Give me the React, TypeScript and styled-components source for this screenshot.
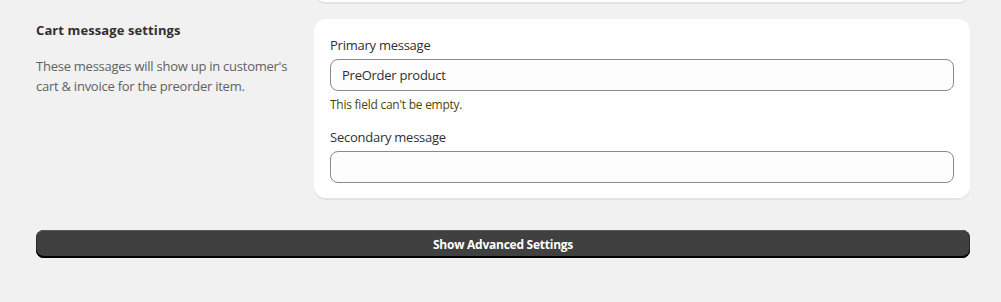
import React from 'react'
import styled, { createGlobalStyle } from 'styled-components'

const GlobalStyle = createGlobalStyle`
  html, body {
    margin: 0;
    padding: 0;
    background: #f1f1f1;
    font-family: "Open Sans", "Noto Sans", sans-serif;
    letter-spacing: -0.25px;
    color: #303030;
  }
  * { box-sizing: border-box; }
`

const Page = styled.div`
  padding: 0 31px 0 36px;
  display: flex;
  flex-direction: column;
`

const Section = styled.div`
  display: grid;
  grid-template-columns: 258px 1fr;
  column-gap: 20px;
  margin-top: 16px;
`

const Annotation = styled.div`
  display: flex;
  flex-direction: column;
  gap: 16px;
  padding-top: 1px;
`

const Heading = styled.h2`
  margin: 0;
  font-size: 13px;
  font-weight: 700;
  line-height: 20px;
  letter-spacing: 0.1px;
  color: #303030;
`

const Description = styled.p`
  margin: 0;
  font-size: 13px;
  line-height: 20px;
  color: #616161;
`

const Card = styled.div<{ $stub?: boolean }>`
  background: #ffffff;
  border-radius: 12px;
  box-shadow: 0 1px 0 0 rgba(26, 26, 26, 0.07), inset 0 -1px 0 0 #e3e3e3;
  padding: ${(p) => (p.$stub ? '0' : '16px')};
  height: ${(p) => (p.$stub ? '40px' : 'auto')};
  margin-top: ${(p) => (p.$stub ? '-37px' : '0')};
`

const TopRow = styled.div`
  display: grid;
  grid-template-columns: 258px 1fr;
  column-gap: 20px;
`

const Field = styled.div`
  display: flex;
  flex-direction: column;
`

const Label = styled.label`
  font-size: 13px;
  line-height: 20px;
  color: #303030;
  margin-bottom: 4px;
`

const Input = styled.input`
  height: 32px;
  width: 100%;
  border: 1px solid #8a8a8a;
  border-radius: 8px;
  background: #fdfdfd;
  padding: 0 11px;
  font-family: inherit;
  letter-spacing: inherit;
  font-size: 13px;
  color: #303030;
  outline: none;
`

const ErrorText = styled.div`
  margin-top: 6px;
  font-size: 12px;
  line-height: 16px;
  color: #4f4700;
`

const Fields = styled.div`
  display: flex;
  flex-direction: column;
  gap: 14px;
`

const AdvancedButton = styled.button`
  margin-top: 31px;
  height: 28px;
  width: 100%;
  border: none;
  border-radius: 8px;
  background: #404040;
  color: #ffffff;
  font-family: inherit;
  letter-spacing: inherit;
  font-size: 12px;
  font-weight: 700;
  cursor: pointer;
  box-shadow: inset 0 -2px 0 0 #000000, inset 0 1px 0 0 #5a5a5a, inset 0 0 0 1px #2a2a2a;
`

export default function App() {
  return (
    <>
      <GlobalStyle />
      <Page>
        <TopRow>
          <div />
          <Card $stub />
        </TopRow>
        <Section>
          <Annotation>
            <Heading>Cart message settings</Heading>
            <Description>
              These messages will show up in customer's cart &amp; invoice for the preorder item.
            </Description>
          </Annotation>
          <Card>
            <Fields>
              <Field>
                <Label>Primary message</Label>
                <Input defaultValue="PreOrder product" />
                <ErrorText>This field can't be empty.</ErrorText>
              </Field>
              <Field>
                <Label>Secondary message</Label>
                <Input defaultValue="" />
              </Field>
            </Fields>
          </Card>
        </Section>
        <AdvancedButton>Show Advanced Settings</AdvancedButton>
      </Page>
    </>
  )
}
